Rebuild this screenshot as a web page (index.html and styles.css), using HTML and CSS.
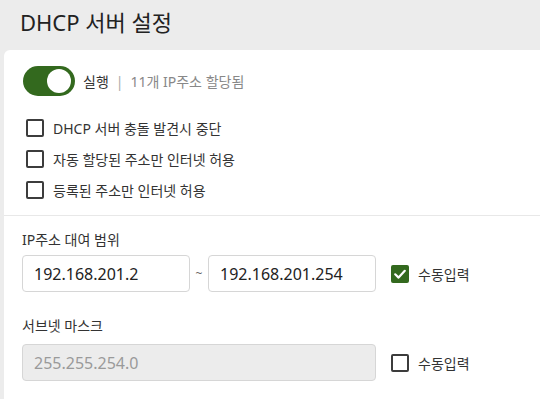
FILE: index.html
```html
<!DOCTYPE html>
<html lang="ko">
<head>
<meta charset="utf-8">
<link rel="stylesheet" href="styles.css">
</head>
<body>
<div class="page">
  <header class="header"><h1 class="title">DHCP 서버 설정</h1></header>
  <main class="card">
    <section class="section top">
      <div class="toggle-row">
        <span class="toggle"><span class="knob"></span></span>
        <span class="run">실행</span>
        <span class="sep">|</span>
        <span class="info">11개 IP주소 할당됨</span>
      </div>
      <label class="check-row"><span class="box"></span><span>DHCP 서버 충돌 발견시 중단</span></label>
      <label class="check-row"><span class="box"></span><span>자동 할당된 주소만 인터넷 허용</span></label>
      <label class="check-row"><span class="box"></span><span>등록된 주소만 인터넷 허용</span></label>
    </section>
    <section class="section bottom">
      <div class="field-label">IP주소 대여 범위</div>
      <div class="field-row">
        <div class="input">192.168.201.2</div>
        <span class="tilde">~</span>
        <div class="input">192.168.201.254</div>
        <label class="check-row manual"><span class="box checked"><svg viewBox="0 0 18 18" width="18" height="18"><path d="M4.2 9.3 L7.6 12.6 L13.8 5.8" fill="none" stroke="#fff" stroke-width="2.2" stroke-linecap="round" stroke-linejoin="round"/></svg></span><span>수동입력</span></label>
      </div>
      <div class="field-label second">서브넷 마스크</div>
      <div class="field-row">
        <div class="input wide disabled">255.255.254.0</div>
        <label class="check-row manual"><span class="box"></span><span>수동입력</span></label>
      </div>
    </section>
  </main>
</div>
</body>
</html>
```
FILE: styles.css
```css
* { box-sizing: border-box; }
html, body { margin: 0; padding: 0; }
body {
  width: 540px;
  height: 399px;
  overflow: hidden;
  background: #ececec;
  font-family: "Noto Sans", "Noto Sans CJK KR", sans-serif;
  color: #333;
}
.page { display: flex; flex-direction: column; }
.header { height: 50px; padding-left: 20px; display: flex; align-items: center; }
.title {
  margin: 0;
  font-size: 22px;
  font-weight: 400;
  color: #222;
  line-height: 28px;
  margin-top: -6px;
}
.card {
  margin-left: 4px;
  width: 560px;
  background: #fff;
  border-top-left-radius: 6px;
  height: 360px;
}
.section.top {
  padding: 16px 0 10px 19px;
  border-bottom: 1px solid #e8e8e8;
}
.toggle-row { display: flex; align-items: center; height: 30px; margin-bottom: 16px; }
.toggle {
  width: 52px; height: 30px; border-radius: 15px;
  background: #33691e;
  display: flex; align-items: center; justify-content: flex-end;
  padding-right: 4px;
}
.knob { width: 24px; height: 24px; border-radius: 50%; background: #fff; }
.run { margin-left: 8px; font-size: 14px; color: #333; }
.sep { margin: 0 7px; font-size: 14px; color: #aaa; }
.info { font-size: 14px; color: #888; }
.check-row {
  display: flex; align-items: center; height: 31px;
  font-size: 14px; color: #333;
  padding-left: 3px;
}
.box {
  width: 18px; height: 18px;
  border: 2px solid #3c3c3c; border-radius: 2px;
  margin-right: 9px;
  display: inline-flex; align-items: center; justify-content: center;
  flex: none;
}
.box.checked { background: #33691e; border-color: #33691e; }
.box.checked svg { width: 18px; height: 18px; flex: none; }
.section.bottom { padding: 14px 0 0 18px; }
.field-label { font-size: 14px; line-height: 20px; color: #333; margin-bottom: 5px; }
.field-label.second { margin-top: 24px; margin-bottom: 8px; }
.field-row { display: flex; align-items: center; }
.input {
  width: 168px; height: 37px;
  border: 1px solid #d6d6d6; border-radius: 4px;
  padding-left: 11px;
  display: flex; align-items: center;
  font-size: 16px; color: #222;
}
.input.wide { width: 354px; }
.input.disabled { background: #ececec; color: #9a9a9a; }
.tilde { width: 18px; text-align: center; font-size: 12px; color: #666; }
.manual { margin-left: 12px; }
```
